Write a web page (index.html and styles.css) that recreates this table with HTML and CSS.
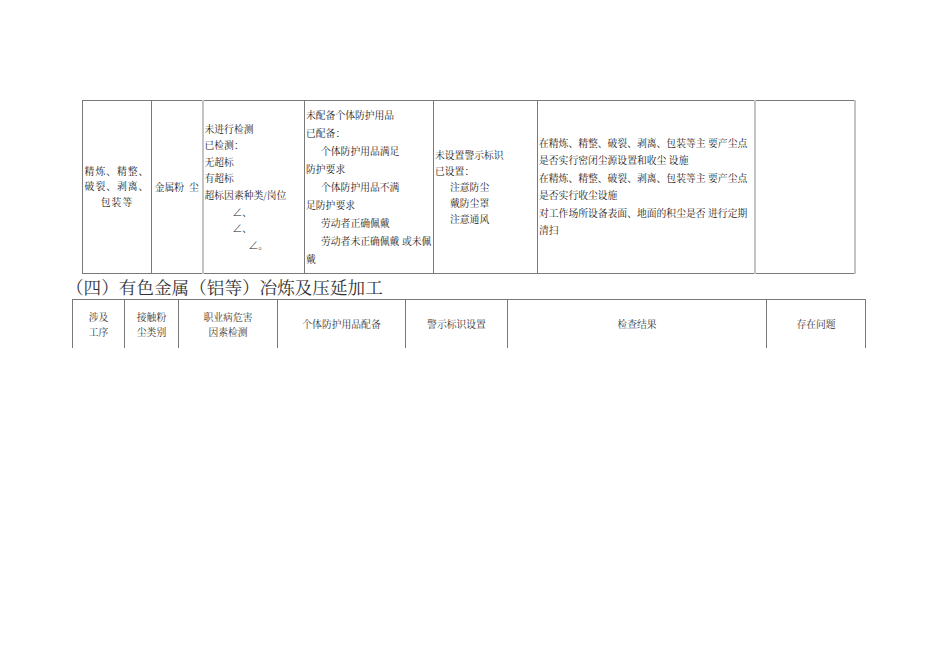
FILE: index.html
```html
<!DOCTYPE html>
<html lang="zh">
<head>
<meta charset="utf-8">
<link rel="stylesheet" href="styles.css">
</head>
<body>
<div class="page">
  <table class="t1">
    <colgroup>
      <col style="width:69px"><col style="width:51px"><col style="width:102px"><col style="width:129px"><col style="width:104px"><col style="width:217px"><col style="width:100px">
    </colgroup>
    <tr>
      <td class="c1"><div>精炼、精整、</div><div>破裂、剥离、</div><div>包装等</div></td>
      <td class="c2">金属粉&nbsp;&nbsp;尘</td>
      <td class="c3 soft">
        <div>未进行检测</div>
        <div>已检测：</div>
        <div>无超标</div>
        <div>有超标</div>
        <div>超标因素种类/岗位</div>
        <div class="i28">∠、</div>
        <div class="i28">∠、</div>
        <div class="i44">∠。</div>
      </td>
      <td class="c4">
        <div>未配备个体防护用品</div>
        <div>已配备：</div>
        <div class="i15">个体防护用品满足</div>
        <div>防护要求</div>
        <div class="i15">个体防护用品不满</div>
        <div>足防护要求</div>
        <div class="i15">劳动者正确佩戴</div>
        <div class="i15">劳动者未正确佩戴 或未佩</div>
        <div>戴</div>
      </td>
      <td class="c5">
        <div>未设置警示标识</div>
        <div>已设置：</div>
        <div class="i15">注意防尘</div>
        <div class="i15">戴防尘罩</div>
        <div class="i15">注意通风</div>
      </td>
      <td class="c6">
        <div>在精炼、精整、破裂、剥离、包装等主 要产尘点</div>
        <div>是否实行密闭尘源设置和收尘 设施</div>
        <div>在精炼、精整、破裂、剥离、包装等主 要产尘点</div>
        <div>是否实行收尘设施</div>
        <div>对工作场所设备表面、地面的积尘是否 进行定期</div>
        <div>清扫</div>
      </td>
      <td class="c7 soft softr"></td>
    </tr>
  </table>

  <h2 class="heading"><span class="po">（</span>四<span class="pc">）</span>有色金属<span class="po">（</span>铝等<span class="pc">）</span>冶炼及压延加工</h2>

  <table class="t2">
    <colgroup>
      <col style="width:52px"><col style="width:54px"><col style="width:99px"><col style="width:128px"><col style="width:102px"><col style="width:259px"><col style="width:99px">
    </colgroup>
    <tr>
      <th><div>涉及</div><div>工序</div></th>
      <th><div>接触粉</div><div>尘类别</div></th>
      <th><div>职业病危害</div><div>因素检测</div></th>
      <th>个体防护用品配备</th>
      <th>警示标识设置</th>
      <th>检查结果</th>
      <th>存在问题</th>
    </tr>
  </table>
</div>
</body>
</html>
```

FILE: styles.css
```css
html, body {
  margin: 0;
  padding: 0;
  background: #ffffff;
}
body {
  font-family: "Noto Serif CJK SC", "Noto Sans CJK SC", serif;
  color: #222;
}
.page {
  width: 950px;
  height: 672px;
  overflow: hidden;
  padding-top: 100px;
  box-sizing: border-box;
}
table {
  border-collapse: collapse;
  table-layout: fixed;
}
.t1 {
  margin-left: 82px;
  width: 772px;
}
.t1 td {
  height: 172px;
  border: 1px solid #7a7a7a;
  vertical-align: middle;
  padding: 0 1px;
  font-size: 9.8px;
  line-height: 16.6px;
  white-space: nowrap;
  overflow: visible;
}
.t1 td.soft {
  border-left: 2px solid #c4c4c4;
}
.t1 td.softr {
  border-right: 2px solid #c4c4c4;
}
.c1 {
  text-align: center;
  line-height: 15.5px !important;
  letter-spacing: 1px;
}
.c2 {
  text-align: center;
}
.c4 {
  line-height: 18px !important;
}
.c5 {
  line-height: 16px !important;
}
.c6 {
  line-height: 17.5px !important;
}
.i15 { padding-left: 15px; }
.i28 { padding-left: 28px; }
.i44 { padding-left: 44px; }

.heading {
  margin: 0 0 0 66px;
  height: 25px;
  line-height: 25px;
  font-size: 17.6px;
  font-weight: normal;
  color: #333;
  letter-spacing: 0;
  white-space: nowrap;
}
.po, .pc {
  display: inline-block;
  width: 1em;
}
.po { text-align: right; }
.pc { text-align: left; }
.t2 {
  margin-left: 72px;
  width: 793px;
}
.t2 th {
  height: 48px;
  border: 1px solid #7a7a7a;
  border-bottom: none;
  font-weight: normal;
  font-size: 9.8px;
  line-height: 15px;
  text-align: center;
  vertical-align: top;
  padding: 10px 0 0 0;
  box-sizing: border-box;
  color: #333;
}
.t2 th:nth-child(n+4) {
  padding-top: 17px;
}
```
